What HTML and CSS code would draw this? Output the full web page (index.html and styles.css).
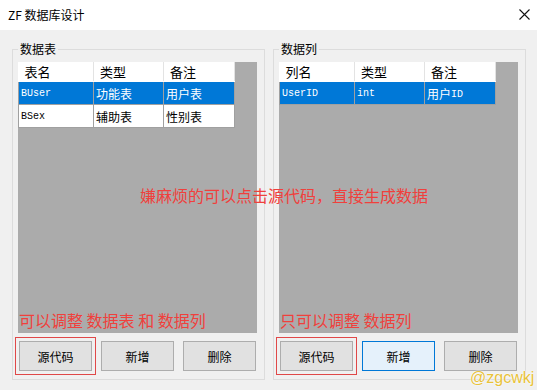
FILE: index.html
```html
<!DOCTYPE html>
<html lang="zh-CN">
<head>
  <meta charset="UTF-8" />
  <title>ZF 数据库设计</title>
  <link rel="stylesheet" href="styles.css">
</head>
<body>
  <div class="window">
    <div class="titlebar">
      <span class="title">ZF 数据库设计</span>
      <svg class="close" width="11" height="11" viewBox="0 0 11 11">
        <path d="M0.5 0.5 L10.5 10.5 M10.5 0.5 L0.5 10.5" stroke="#111" stroke-width="1.1" fill="none"/>
      </svg>
    </div>

    <div class="content">
      <fieldset class="group">
        <legend>数据表</legend>
        <div class="grid">
          <table class="tables">
            <thead>
              <tr><th>表名</th><th>类型</th><th>备注</th></tr>
            </thead>
            <tbody>
              <tr class="selected"><td class="code">BUser</td><td>功能表</td><td>用户表</td></tr>
              <tr><td class="code">BSex</td><td>辅助表</td><td>性别表</td></tr>
            </tbody>
          </table>
          <p class="note">可以调整 数据表 和 数据列</p>
        </div>
        <div class="actions">
          <button class="marked">源代码</button>
          <button>新增</button>
          <button>删除</button>
        </div>
      </fieldset>

      <fieldset class="group">
        <legend>数据列</legend>
        <div class="grid">
          <table class="columns">
            <thead>
              <tr><th>列名</th><th>类型</th><th>备注</th></tr>
            </thead>
            <tbody>
              <tr class="selected"><td class="code">UserID</td><td class="code">int</td><td>用户<span class="code">ID</span></td></tr>
            </tbody>
          </table>
          <p class="note">只可以调整 数据列</p>
        </div>
        <div class="actions">
          <button class="marked">源代码</button>
          <button class="focus">新增</button>
          <button>删除</button>
        </div>
      </fieldset>
    </div>

    <p class="hint">嫌麻烦的可以点击源代码，直接生成数据</p>
    <span class="watermark">@zgcwkj</span>
  </div>
</body>
</html>
```

FILE: styles.css
```css
body {
  margin: 0;
  font-family: "Noto Sans CJK SC", "Liberation Sans", sans-serif;
  background: #f0f0f0;
  color: #000;
}

.window {
  position: relative;
  width: 537px;
  height: 390px;
  overflow: hidden;
}

.titlebar {
  height: 30px;
  background: #fff;
  display: flex;
  align-items: center;
  justify-content: space-between;
  padding: 0 7px 0 8px;
}

.title {
  font-size: 12px;
  line-height: 16px;
}

.close {
  display: block;
  margin-top: -2px;
}

.content {
  display: flex;
  gap: 8px;
  padding: 11px 11px 0 12px;
}

.group {
  box-sizing: border-box;
  width: 253px;
  min-width: 0;
  margin: 0;
  padding: 0 7px 8px 5px;
  border: 1px solid #dcdcdc;
}

.group legend {
  padding: 0 2px;
  font-size: 12px;
  line-height: 16px;
}

.grid {
  display: flex;
  flex-direction: column;
  align-items: flex-start;
  height: 271px;
  margin-top: 5px;
  background: #ababab;
}

.grid table {
  width: 216px;
  border-collapse: collapse;
  table-layout: fixed;
  background: #fff;
}

.grid th {
  box-sizing: border-box;
  height: 19px;
  padding: 0 0 0 6px;
  font-size: 13px;
  font-weight: normal;
  text-align: left;
  border-right: 1px solid #e3e3e3;
  border-bottom: 1px solid #fff;
}

.grid td {
  height: 22px;
  padding: 0 0 0 2px;
  font-size: 12px;
  border: 1px solid #a0a0a0;
  white-space: nowrap;
  overflow: hidden;
}

.tables th:nth-child(1) { width: 75px; }
.tables th:nth-child(2) { width: 70px; }
.tables th:nth-child(3) { width: 71px; }

.columns th:nth-child(1) { width: 75px; }
.columns th:nth-child(2) { width: 70px; }
.columns th:nth-child(3) { width: 71px; }

.grid .code {
  font-family: "Liberation Mono", monospace;
  font-size: 10px;
}

.grid td span.code {
  font-size: 10px;
  vertical-align: 2px;
}

.selected td {
  background: #0078d7;
  color: #fff;
}

.note {
  margin: auto 0 4px 1px;
  font-size: 16px;
  line-height: 18px;
  color: #f0403c;
}

.actions {
  display: flex;
  justify-content: space-between;
  margin: 8px 1px 0;
}

.actions button {
  width: 73px;
  height: 30px;
  padding: 0;
  background: #e1e1e1;
  border: 1px solid #adadad;
  font-family: "Noto Sans CJK SC", sans-serif;
  font-size: 12px;
  color: #000;
}

.actions .marked {
  outline: 1px solid #e04848;
  outline-offset: 3px;
}

.actions .focus {
  background: #e5f1fb;
  border-color: #0078d7;
}

.hint {
  position: absolute;
  left: 140px;
  top: 186px;
  margin: 0;
  font-size: 16px;
  line-height: 18px;
  color: #f0403c;
}

.watermark {
  position: absolute;
  left: 470px;
  top: 368px;
  font-family: "Liberation Sans", sans-serif;
  font-size: 16px;
  line-height: 20px;
  color: #e8c23a;
  text-shadow: 0 0 2px #fff, 0 0 1px #fff;
}
```
